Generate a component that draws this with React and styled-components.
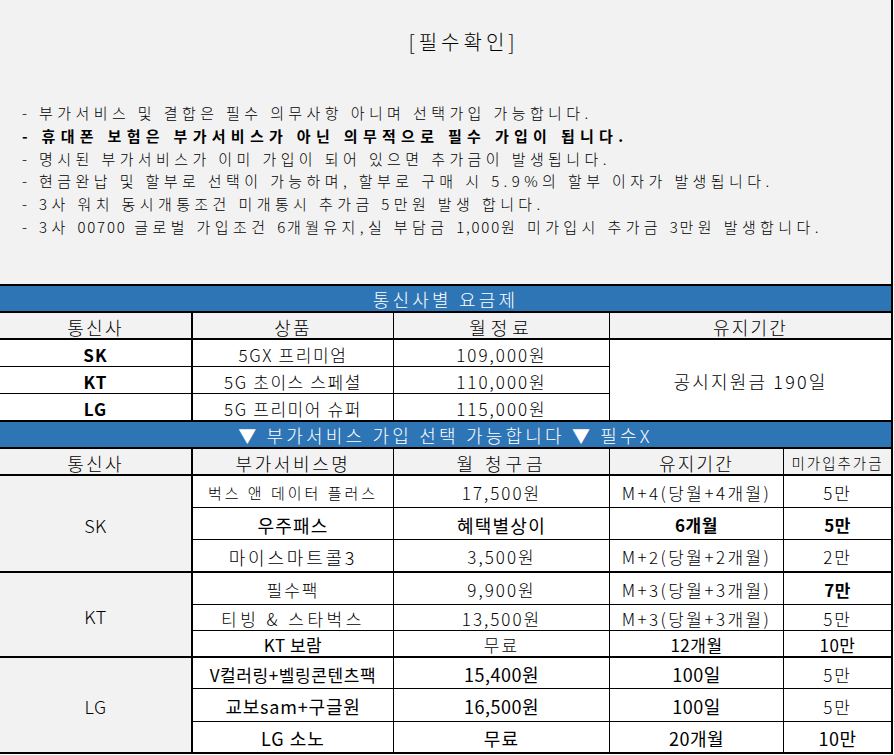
import React from 'react'
import styled, { createGlobalStyle } from 'styled-components'

const GlobalStyle = createGlobalStyle`
  body {
    margin: 0;
    background: #fff;
    font-family: "Noto Sans CJK KR", "Noto Sans", sans-serif;
    color: #000;
  }
`

const Sheet = styled.div`
  width: 891px;
  border-right: 2px solid #000;
`

const Notice = styled.section`
  height: 284px;
  background: #f2f2f2;
  box-sizing: border-box;
  padding-top: 29px;
`

const NoticeTitle = styled.h2`
  margin: 0;
  text-align: center;
  font-size: 20px;
  line-height: 26px;
  font-weight: 300;
  letter-spacing: 4px;
  padding-left: 36px;
`

const NoticeList = styled.ul`
  list-style: none;
  margin: 47px 0 0;
  padding: 0 0 0 22px;
`

const NoticeItem = styled.li`
  font-size: 15px;
  line-height: 22.8px;
  letter-spacing: ${p => (p.$bold ? '5.3px' : '4.4px')};
  font-weight: ${p => (p.$bold ? 700 : 300)};
  white-space: nowrap;
`

const Digits = styled.span`
  letter-spacing: 1.8px;
`

const Grid = styled.div`
  display: grid;
  grid-template-columns: ${p => p.$cols};
`

const Banner = styled.div`
  grid-column: 1 / -1;
  height: 25px;
  border-top: 2px solid #000;
  border-bottom: 2px solid #000;
  background: #2e75b6;
  color: #fff;
  display: flex;
  align-items: center;
  justify-content: center;
  font-size: 18px;
  font-weight: 300;
  letter-spacing: 3.2px;
`

const Cell = styled.div`
  box-sizing: border-box;
  height: ${p => p.$h}px;
  background: ${p => (p.$grey ? '#f2f2f2' : '#fff')};
  border-right: ${p => (p.$last ? 'none' : `${p.$rw || 1}px solid #000`)};
  border-bottom: ${p => (p.$bw === 0 ? 'none' : `${p.$bw || 1}px solid #000`)};
  display: flex;
  align-items: center;
  justify-content: center;
  white-space: nowrap;
  padding-top: 2px;
  font-size: ${p => p.$size || 17}px;
  font-weight: ${p => (p.$bold ? 700 : p.$em ? 400 : 300)};
  letter-spacing: ${p => p.$ls ?? (p.$em || p.$bold ? '1.2px' : '2px')};
`

const HeadCell = styled(Cell).attrs({ $grey: true, $bw: 2, $h: 27 })`
  font-size: ${p => p.$size || 18}px;
  letter-spacing: ${p => p.$ls ?? '2.2px'};
`

const PLAN_COLS = '193px 201px 216px 281px'
const ADDON_COLS = '193px 201px 216px 174px 107px'

const plans = [
  { carrier: 'SK', name: '5GX 프리미엄', fee: '109,000원' },
  { carrier: 'KT', name: '5G 초이스 스페셜', fee: '110,000원' },
  { carrier: 'LG', name: '5G 프리미어 슈퍼', fee: '115,000원' },
]

const addons = [
  {
    carrier: 'SK',
    rows: [
      { h: 32, name: ['벅스 앤 데이터 플러스', { size: 15, ls: '3px' }], price: ['17,500원'], term: ['M+4(당월+4개월)', { ls: '2.4px' }], extra: ['5만'] },
      { h: 32, name: ['우주패스', { em: true, size: 18 }], price: ['혜택별상이', { em: true, size: 18 }], term: ['6개월', { bold: true, ls: '0.5px' }], extra: ['5만', { bold: true, ls: '0.5px' }] },
      { h: 33, name: ['마이스마트콜3', { size: 18, ls: '2.8px' }], price: ['3,500원'], term: ['M+2(당월+2개월)', { ls: '2.4px' }], extra: ['2만'] },
    ],
  },
  {
    carrier: 'KT',
    rows: [
      { h: 32, name: ['필수팩'], price: ['9,900원'], term: ['M+3(당월+3개월)', { ls: '2.4px' }], extra: ['7만', { bold: true, ls: '0.5px' }] },
      { h: 26, name: ['티빙 & 스타벅스', { ls: '3.5px' }], price: ['13,500원'], term: ['M+3(당월+3개월)', { ls: '2.4px' }], extra: ['5만'] },
      { h: 27, name: ['KT 보람', { em: true, ls: '0.5px' }], price: ['무료'], term: ['12개월', { em: true, ls: '0.5px' }], extra: ['10만', { em: true, ls: '0.5px' }] },
    ],
  },
  {
    carrier: 'LG',
    rows: [
      { h: 31, name: ['V컬러링+벨링콘텐츠팩', { em: true, ls: '0.6px' }], price: ['15,400원', { em: true, size: 18, ls: '0.5px' }], term: ['100일', { em: true, size: 18, ls: '0.5px' }], extra: ['5만'] },
      { h: 33, name: ['교보sam+구글원', { em: true, size: 18, ls: '0.8px' }], price: ['16,500원', { em: true, size: 18, ls: '0.5px' }], term: ['100일', { em: true, size: 18, ls: '0.5px' }], extra: ['5만'] },
      { h: 32, name: ['LG 소노', { em: true, size: 18, ls: '1px' }], price: ['무료', { em: true, size: 18 }], term: ['20개월', { em: true, size: 18, ls: '0.5px' }], extra: ['10만', { em: true, size: 18, ls: '0.5px' }] },
    ],
  },
]

const Value = ({ spec, ...rest }) => {
  const [text, opts = {}] = spec
  return (
    <Cell {...rest} $em={opts.em} $bold={opts.bold} $size={opts.size} $ls={opts.ls}>
      {text}
    </Cell>
  )
}

const App = () => {
  return (
    <Sheet>
      <GlobalStyle />
      <Notice>
        <NoticeTitle>[필수확인]</NoticeTitle>
        <NoticeList>
          <NoticeItem>- 부가서비스 및 결합은 필수 의무사항 아니며 선택가입 가능합니다.</NoticeItem>
          <NoticeItem $bold>- 휴대폰 보험은 부가서비스가 아닌 의무적으로 필수 가입이 됩니다.</NoticeItem>
          <NoticeItem>- 명시된 부가서비스가 이미 가입이 되어 있으면 추가금이 발생됩니다.</NoticeItem>
          <NoticeItem>- 현금완납 및 할부로 선택이 가능하며, 할부로 구매 시 5.9%의 할부 이자가 발생됩니다.</NoticeItem>
          <NoticeItem>- 3사 워치 동시개통조건 미개통시 추가금 5만원 발생 합니다.</NoticeItem>
          <NoticeItem>
            - 3사 <Digits>00700</Digits> 글로벌 가입조건 <Digits>6</Digits>개월유지,실 부담금{' '}
            <Digits>1,000</Digits>원 미가입시 추가금 <Digits>3</Digits>만원 발생합니다.
          </NoticeItem>
        </NoticeList>
      </Notice>

      <Grid $cols={PLAN_COLS}>
        <Banner>통신사별 요금제</Banner>
        <HeadCell $rw={2}>통신사</HeadCell>
        <HeadCell>상품</HeadCell>
        <HeadCell $ls="5px">월정료</HeadCell>
        <HeadCell $last>유지기간</HeadCell>
        {plans.map((p, i) => {
          const h = i === 2 ? 26 : 27
          const bw = i === 2 ? 0 : 1
          const row = { gridRow: i + 3 }
          return (
            <React.Fragment key={p.carrier}>
              <Cell $h={h} $rw={2} $bw={bw} $bold $ls="1px" style={row}>{p.carrier}</Cell>
              <Cell $h={h} $bw={bw} $ls="1.6px" style={row}>{p.name}</Cell>
              <Cell $h={h} $bw={bw} style={row}>{p.fee}</Cell>
            </React.Fragment>
          )
        })}
        <Cell $h={80} $bw={0} $last $size={18} $ls="2.2px" style={{ gridColumn: 4, gridRow: '3 / span 3' }}>
          공시지원금 190일
        </Cell>
      </Grid>

      <Grid $cols={ADDON_COLS}>
        <Banner>▼ 부가서비스 가입 선택 가능합니다 ▼ 필수X</Banner>
        <HeadCell $rw={2}>통신사</HeadCell>
        <HeadCell $ls="2.6px">부가서비스명</HeadCell>
        <HeadCell $ls="4px">월 청구금</HeadCell>
        <HeadCell>유지기간</HeadCell>
        <HeadCell $last $size={14.5} $ls="2px">미가입추가금</HeadCell>
        {addons.map((g, gi) => (
          <React.Fragment key={g.carrier}>
            <Cell
              $grey
              $rw={2}
              $bw={2}
              $ls="0.5px"
              $size={18}
              style={{ gridColumn: 1, gridRow: `${gi * 3 + 3} / span 3` }}
            >
              {g.carrier}
            </Cell>
            {g.rows.map((r, ri) => {
              const bw = ri === 2 ? 2 : 1
              const row = { gridRow: gi * 3 + ri + 3 }
              return (
                <React.Fragment key={ri}>
                  <Value spec={r.name} $h={r.h} $bw={bw} style={{ ...row, gridColumn: 2 }} />
                  <Value spec={r.price} $h={r.h} $bw={bw} style={{ ...row, gridColumn: 3 }} />
                  <Value spec={r.term} $h={r.h} $bw={bw} style={{ ...row, gridColumn: 4 }} />
                  <Value spec={r.extra} $h={r.h} $bw={bw} $last style={{ ...row, gridColumn: 5 }} />
                </React.Fragment>
              )
            })}
          </React.Fragment>
        ))}
      </Grid>
    </Sheet>
  )
}

export default App
